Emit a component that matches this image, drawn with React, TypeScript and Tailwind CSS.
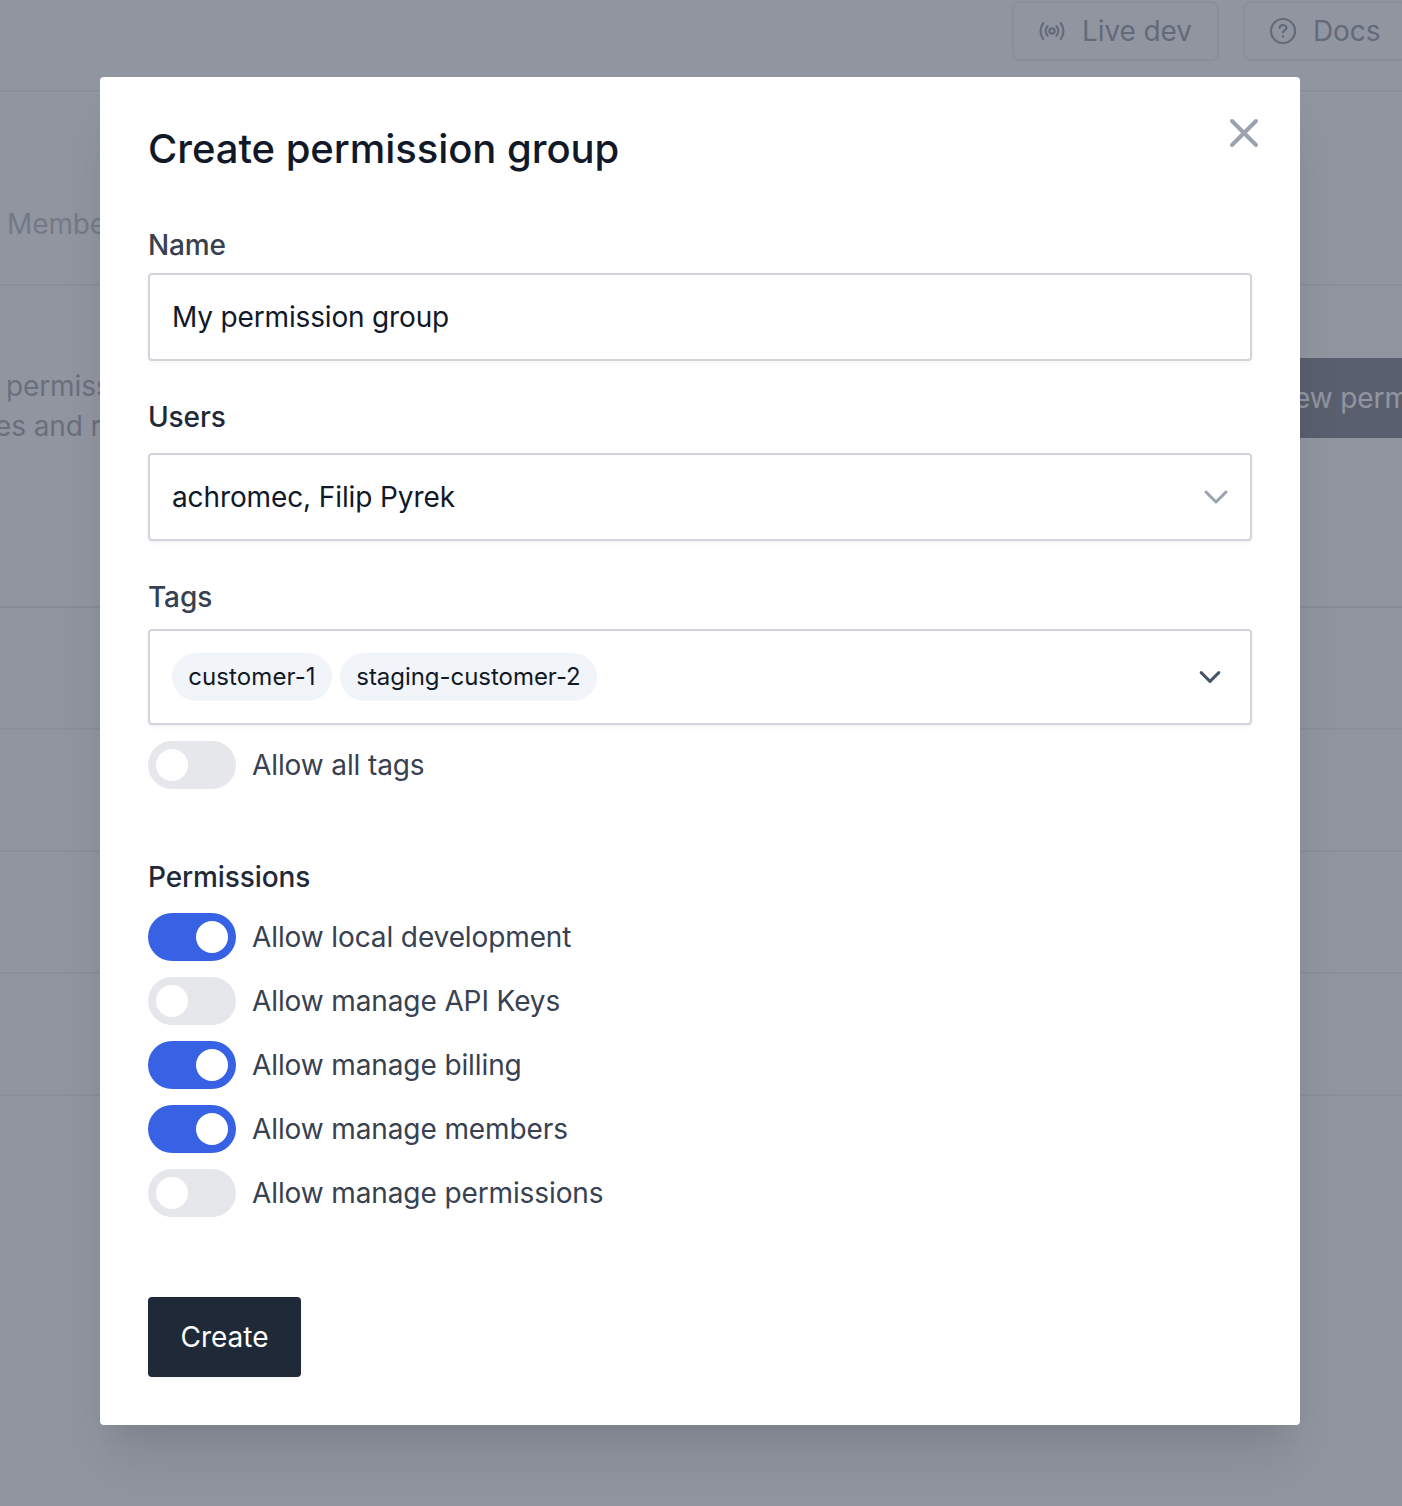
import React from "react";

function Line({ className }: { className: string }) {
  return <div className={`h-0.5 w-full shrink-0 ${className}`} />;
}

function BroadcastIcon() {
  return (
    <svg className="h-7 w-7" viewBox="0 0 28 28" fill="none" stroke="currentColor" strokeWidth="2.2" strokeLinecap="round">
      <circle cx="14" cy="14" r="2.6" />
      <path d="M9.600 9.200a6.900 6.900 0 0 0 0 9.600M18.400 9.200a6.900 6.900 0 0 1 0 9.600" />
      <path d="M5.200 6.200a12.600 12.600 0 0 0 0 15.600M22.800 6.200a12.600 12.600 0 0 1 0 15.600" />
    </svg>
  );
}

function QuestionIcon() {
  return (
    <svg className="h-7 w-7" viewBox="0 0 28 28" fill="none" stroke="currentColor" strokeWidth="2.2" strokeLinecap="round" strokeLinejoin="round">
      <circle cx="14" cy="14" r="12" />
      <path d="M10.600 10.800c.2-1.700 1.600-2.800 3.400-2.800s3.500 1.200 3.500 2.900c0 2.300-3.500 2.400-3.500 4.500" />
      <circle cx="14" cy="19.600" r=".5" fill="currentColor" strokeWidth="1.500" />
    </svg>
  );
}

function Background() {
  return (
    <div className="flex h-[1506px] w-[1402px] flex-col overflow-hidden bg-white">
      <header className="flex h-[90px] shrink-0 justify-end gap-6 pt-px">
        <div className="flex h-[60px] w-[207px] items-center gap-4 rounded-lg border-2 border-gray-200 pl-6 text-[#4b5563]">
          <BroadcastIcon />
          <span>Live dev</span>
        </div>
        <div className="-mr-[5px] flex h-[60px] w-[164px] items-center gap-4 rounded-lg border-2 border-gray-200 pl-6 text-[#4b5563]">
          <QuestionIcon />
          <span>Docs</span>
        </div>
      </header>
      <Line className="bg-gray-200" />
      <div className="flex h-[192px] shrink-0 items-end pb-10 pl-[7px] text-[#8b8f98]">Members</div>
      <Line className="bg-gray-200" />
      <section className="flex h-[320px] shrink-0 items-start justify-between pt-[72px]">
        <p className="pt-2 leading-10 whitespace-nowrap text-[#636873]">
          <span className="ml-1.5">permissions</span>
          <br />
          <span className="-ml-[5px]">es and roles</span>
        </p>
        <div className="flex h-20 w-[150px] items-center overflow-hidden bg-[#252b38] pl-[42px] whitespace-nowrap text-white">ew permission</div>
      </section>
      <Line className="bg-gray-300" />
      <div className="h-[120px] shrink-0 bg-gray-50" />
      <Line className="bg-gray-200" />
      <div className="h-[120px] shrink-0" />
      <Line className="bg-gray-200" />
      <div className="h-[120px] shrink-0" />
      <Line className="bg-gray-200" />
      <div className="h-[120px] shrink-0" />
      <Line className="bg-gray-200" />
    </div>
  );
}

function Toggle({ on, label }: { on?: boolean; label: string }) {
  return (
    <div className="flex h-12 items-center gap-4 text-[#374151]">
      <div className={`flex h-12 w-[88px] items-center rounded-full px-2 ${on ? "justify-end bg-[#3762e3]" : "justify-start bg-[#e5e7eb]"}`}>
        <div className="h-8 w-8 rounded-full bg-white" />
      </div>
      <span>{label}</span>
    </div>
  );
}

const box = "flex items-center justify-between rounded border-2 border-[#d1d5db] bg-white pl-[22px] shadow-[0_2px_4px_rgba(0,0,0,0.05)]";

function Tag({ children, className }: { children: string; className: string }) {
  return <span className={`flex h-12 items-center justify-center rounded-full bg-[#f1f5f9] text-2xl ${className}`}>{children}</span>;
}

const permissions = [
  { label: "Allow local development", on: true },
  { label: "Allow manage API Keys", on: false },
  { label: "Allow manage billing", on: true },
  { label: "Allow manage members", on: true },
  { label: "Allow manage permissions", on: false },
];

function Modal() {
  return (
    <div className="flex h-[1348px] w-[1200px] flex-col rounded bg-white px-12 text-[#111827] shadow-[0_40px_50px_-10px_rgba(0,0,0,0.1),0_20px_20px_-10px_rgba(0,0,0,0.04)]">
      <div className="flex h-[144px] items-start justify-between">
        <h2 className="pt-12 text-[40px] leading-[48px] font-medium tracking-[-0.05px]">Create permission group</h2>
        <svg className="mt-8 -mr-4 h-12 w-12 text-[#9ca3af]" viewBox="0 0 24 24" fill="none" stroke="currentColor" strokeWidth="2" strokeLinecap="round">
          <path d="M6 18L18 6M6 6l12 12" />
        </svg>
      </div>
      <label className="mt-1 font-medium text-[#374151]">Name</label>
      <div className={`${box} mt-2 h-[88px] tracking-[-0.16px]`}>My permission group</div>
      <label className="mt-9 font-medium text-[#1f2937]">Users</label>
      <div className={`${box} mt-4 h-[88px]`}>
        achromec, Filip Pyrek
        <svg className="mr-[18px] h-8 w-8" viewBox="0 0 32 32" fill="none" stroke="#9ca3af" strokeWidth="3" strokeLinecap="round" strokeLinejoin="round">
          <path d="M6 11l10 10 10-10" />
        </svg>
      </div>
      <label className="mt-9 font-medium text-[#374151]">Tags</label>
      <div className={`${box} mt-3 h-24`}>
        <div className="flex gap-2">
          <Tag className="w-[160px] tracking-[0.1px]">customer-1</Tag>
          <Tag className="w-[257px] tracking-[-0.04px]">staging-customer-2</Tag>
        </div>
        <svg className="mr-6 h-8 w-8" viewBox="0 0 32 32" fill="none" stroke="#475569" strokeWidth="3" strokeLinecap="round" strokeLinejoin="round">
          <path d="M7.200 11.600l8.800 8.800 8.800-8.800" />
        </svg>
      </div>
      <div className="mt-4">
        <Toggle label="Allow all tags" />
      </div>
      <div className="mt-[68px] font-medium text-[#1f2937]">Permissions</div>
      <div className="mt-4 flex flex-col gap-4">
        {permissions.map((p) => (
          <Toggle key={p.label} on={p.on} label={p.label} />
        ))}
      </div>
      <button className="mt-20 flex h-20 w-[153px] items-center justify-center rounded bg-[#1f2937] tracking-normal text-white shadow-[0_2px_4px_rgba(0,0,0,0.05)]">Create</button>
    </div>
  );
}

export default function App() {
  return (
    <div className="relative h-[1506px] w-[1402px] overflow-hidden font-['Inter',sans-serif] text-[28px] leading-10 tracking-[-0.11px]">
      <Background />
      <div className="absolute inset-0 bg-[#6b7280]/75 pt-[77px] pl-[100px]">
        <Modal />
      </div>
    </div>
  );
}
